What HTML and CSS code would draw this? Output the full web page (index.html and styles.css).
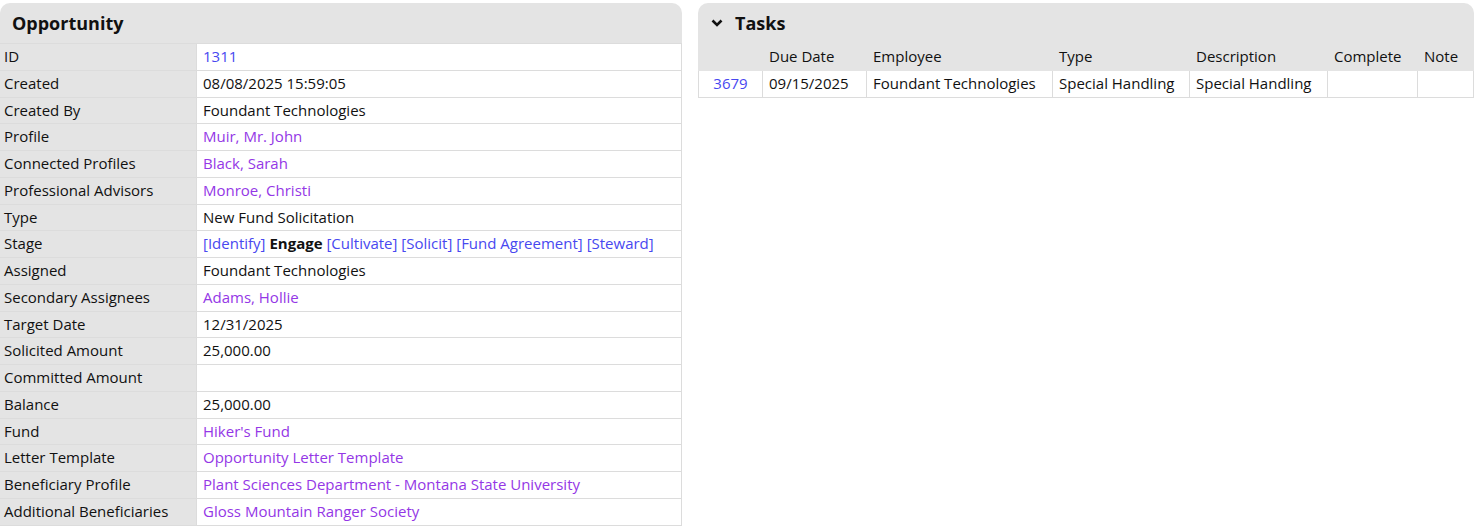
FILE: index.html
```html
<!DOCTYPE html>
<html lang="en">
<head>
  <meta charset="UTF-8">
  <title>Opportunity 1311</title>
  <link rel="stylesheet" href="styles.css">
</head>
<body>
  <div class="layout">
    <!-- Opportunity details -->
    <section class="panel panel-left">
      <h2 class="panel-title">Opportunity</h2>
      <table class="details">
        <tr><th>ID</th><td><a class="link" href="#">1311</a></td></tr>
        <tr><th>Created</th><td>08/08/2025 15:59:05</td></tr>
        <tr><th>Created By</th><td>Foundant Technologies</td></tr>
        <tr><th>Profile</th><td><a class="visited" href="#">Muir, Mr. John</a></td></tr>
        <tr><th>Connected Profiles</th><td><a class="visited" href="#">Black, Sarah</a></td></tr>
        <tr><th>Professional Advisors</th><td><a class="visited" href="#">Monroe, Christi</a></td></tr>
        <tr><th>Type</th><td>New Fund Solicitation</td></tr>
        <tr><th>Stage</th><td><a class="link" href="#">[Identify]</a> <b>Engage</b> <a class="link" href="#">[Cultivate]</a> <a class="link" href="#">[Solicit]</a> <a class="link" href="#">[Fund Agreement]</a> <a class="link" href="#">[Steward]</a></td></tr>
        <tr><th>Assigned</th><td>Foundant Technologies</td></tr>
        <tr><th>Secondary Assignees</th><td><a class="visited" href="#">Adams, Hollie</a></td></tr>
        <tr><th>Target Date</th><td>12/31/2025</td></tr>
        <tr><th>Solicited Amount</th><td>25,000.00</td></tr>
        <tr><th>Committed Amount</th><td></td></tr>
        <tr><th>Balance</th><td>25,000.00</td></tr>
        <tr><th>Fund</th><td><a class="visited" href="#">Hiker's Fund</a></td></tr>
        <tr><th>Letter Template</th><td><a class="visited" href="#">Opportunity Letter Template</a></td></tr>
        <tr><th>Beneficiary Profile</th><td><a class="visited" href="#">Plant Sciences Department - Montana State University</a></td></tr>
        <tr><th>Additional Beneficiaries</th><td><a class="visited" href="#">Gloss Mountain Ranger Society</a></td></tr>
      </table>
    </section>

    <!-- Tasks list -->
    <section class="panel panel-right">
      <h2 class="panel-title">
        <svg class="chevron" width="12" height="10" viewBox="0 0 12 10"><path d="M1.5 2.5 L6 7 L10.5 2.5" fill="none" stroke="#111" stroke-width="2.6"/></svg>
        Tasks
      </h2>
      <table class="tasks">
        <colgroup>
          <col class="w-id">
          <col class="w-due">
          <col class="w-emp">
          <col class="w-type">
          <col class="w-desc">
          <col class="w-done">
          <col>
        </colgroup>
        <thead>
          <tr>
            <th></th>
            <th>Due Date</th>
            <th>Employee</th>
            <th>Type</th>
            <th>Description</th>
            <th>Complete</th>
            <th>Note</th>
          </tr>
        </thead>
        <tbody>
          <tr>
            <td class="cell-id"><a class="link" href="#">3679</a></td>
            <td>09/15/2025</td>
            <td>Foundant Technologies</td>
            <td>Special Handling</td>
            <td>Special Handling</td>
            <td></td>
            <td></td>
          </tr>
        </tbody>
      </table>
    </section>
  </div>
</body>
</html>
```

FILE: styles.css
```css
body {
  margin: 0;
  padding: 3px 2px 0 0;
  font-family: "Open Sans", sans-serif;
  font-size: 15px;
  color: #111;
  background: #fff;
}
.layout {
  display: flex;
  gap: 16px;
  align-items: flex-start;
}
.panel-left {
  flex: 0 0 682px;
}
.panel-right {
  flex: 1;
  min-width: 0;
}
.panel-title {
  margin: 0;
  height: 40px;
  display: flex;
  align-items: center;
  gap: 12px;
  padding: 0 12px;
  background: #e4e4e4;
  border-radius: 10px 10px 0 0;
  font-size: 18px;
  font-weight: 700;
}
.chevron {
  margin-left: 1px;
}
table {
  width: 100%;
  border-collapse: collapse;
}
th, td {
  text-align: left;
  font-weight: 400;
  padding: 4px 6px 4px 4px;
  line-height: 17.76px;
  border: 1px solid #dcdcdc;
  white-space: nowrap;
}
.details th {
  width: 186px;
  background: #e4e4e4;
  border-left: 0;
}
.details td {
  background: #fff;
  padding-left: 6px;
}
.tasks {
  table-layout: fixed;
}
.tasks th {
  background: #e4e4e4;
  border-color: #e4e4e4;
  padding-left: 6px;
}
.tasks td {
  padding-left: 6px;
}
.tasks .cell-id {
  text-align: center;
}
.w-id { width: 64px; }
.w-due { width: 104px; }
.w-emp { width: 186px; }
.w-type { width: 137px; }
.w-desc { width: 138px; }
.w-done { width: 90px; }
a {
  text-decoration: none;
}
.link {
  color: #4848f0;
}
.visited {
  color: #9437e6;
}
b {
  font-weight: 700;
}
```
